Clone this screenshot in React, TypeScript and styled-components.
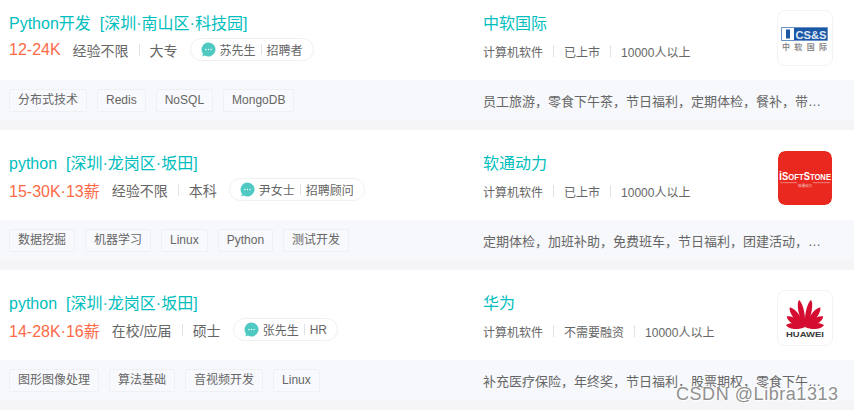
import styled, { createGlobalStyle } from 'styled-components';

const GlobalStyle = createGlobalStyle`
  html, body {
    margin: 0;
    padding: 0;
    background: #fff;
  }
  body {
    font-family: "Liberation Sans", "Noto Sans CJK SC", sans-serif;
    overflow: hidden;
  }
`;

interface Job {
  title: string;
  area: string;
  salary: string;
  experience: string;
  degree: string;
  recruiter: string;
  role: string;
  tags: string[];
  company: string;
  stage: string;
  size: string;
  welfare: string;
  logo: 'css' | 'isoft' | 'huawei';
}

const jobs: Job[] = [
  {
    title: 'Python开发',
    area: '[深圳·南山区·科技园]',
    salary: '12-24K',
    experience: '经验不限',
    degree: '大专',
    recruiter: '苏先生',
    role: '招聘者',
    tags: ['分布式技术', 'Redis', 'NoSQL', 'MongoDB'],
    company: '中软国际',
    stage: '已上市',
    size: '10000人以上',
    welfare: '员工旅游，零食下午茶，节日福利，定期体检，餐补，带薪年假',
    logo: 'css',
  },
  {
    title: 'python',
    area: '[深圳·龙岗区·坂田]',
    salary: '15-30K·13薪',
    experience: '经验不限',
    degree: '本科',
    recruiter: '尹女士',
    role: '招聘顾问',
    tags: ['数据挖掘', '机器学习', 'Linux', 'Python', '测试开发'],
    company: '软通动力',
    stage: '已上市',
    size: '10000人以上',
    welfare: '定期体检，加班补助，免费班车，节日福利，团建活动，餐补',
    logo: 'isoft',
  },
  {
    title: 'python',
    area: '[深圳·龙岗区·坂田]',
    salary: '14-28K·16薪',
    experience: '在校/应届',
    degree: '硕士',
    recruiter: '张先生',
    role: 'HR',
    tags: ['图形图像处理', '算法基础', '音视频开发', 'Linux'],
    company: '华为',
    stage: '不需要融资',
    size: '10000人以上',
    welfare: '补充医疗保险，年终奖，节日福利，股票期权，零食下午茶，餐补',
    logo: 'huawei',
  },
];

const App = () => {
  return (
    <>
      <GlobalStyle />
      <Page>
        <List>
          {jobs.map(job => (
            <Card key={job.salary}>
              <Primary>
                <JobInfo>
                  <TitleRow>
                    <span>{job.title}</span>
                    <span>{job.area}</span>
                  </TitleRow>
                  <MetaRow>
                    <Salary>{job.salary}</Salary>
                    <span>{job.experience}</span>
                    <Divider />
                    <span>{job.degree}</span>
                    <Recruiter>
                      <ChatIcon />
                      <span>{job.recruiter}</span>
                      <SmallDivider />
                      <span>{job.role}</span>
                    </Recruiter>
                  </MetaRow>
                </JobInfo>
                <CompanyInfo>
                  <CompanyName>{job.company}</CompanyName>
                  <CompanyMeta>
                    <span>计算机软件</span>
                    <Divider />
                    <span>{job.stage}</span>
                    <Divider />
                    <span>{job.size}</span>
                  </CompanyMeta>
                </CompanyInfo>
                <LogoBox $filled={job.logo === 'isoft'}>
                  {job.logo === 'css' && <CssLogo />}
                  {job.logo === 'isoft' && <IsoftLogo />}
                  {job.logo === 'huawei' && <HuaweiLogo />}
                </LogoBox>
              </Primary>
              <Footer>
                <Tags>
                  {job.tags.map(tag => <Tag key={tag}>{tag}</Tag>)}
                </Tags>
                <Welfare>{job.welfare}</Welfare>
              </Footer>
            </Card>
          ))}
        </List>
        <Watermark>CSDN @Libra1313</Watermark>
      </Page>
    </>
  );
};

const ChatIcon = () => (
  <svg width="15" height="15" viewBox="0 0 15 15" style={{ flexShrink: 0 }}>
    <path d="M7.5 0.5a7 7 0 1 1-3.6 13l-2.6.9.7-2.7A7 7 0 0 1 7.5.5z" fill="#4fc9c2" />
    <circle cx="4.9" cy="7.5" r=".7" fill="#fff" />
    <circle cx="7.5" cy="7.5" r=".7" fill="#fff" />
    <circle cx="10.1" cy="7.5" r=".7" fill="#fff" />
  </svg>
);

const CssLogo = () => (
  <svg width="54" height="54" viewBox="1 1 54 54">
    <rect x="4" y="17" width="47" height="14" fill="#9dbbe0" />
    <rect x="4.600" y="17.600" width="45.800" height="12.800" fill="#1c57a5" />
    <rect x="5" y="18" width="12" height="12" fill="#fff" />
    <rect x="9" y="19.500" width="4" height="9" fill="#1c57a5" />
    <text x="18.500" y="28.500" fontSize="10" fontWeight="700" fill="#dfe9f5" textLength="31" lengthAdjust="spacingAndGlyphs" fontFamily="Liberation Sans">CS&amp;S</text>
    <text x="5" y="39.500" fontSize="8" fontWeight="700" fill="#8d8d8d" textLength="45" fontFamily="Noto Sans CJK SC">中软国际</text>
  </svg>
);

const IsoftLogo = () => (
  <svg width="54" height="54" viewBox="1 1 54 54">
    <text x="2" y="30" fontSize="9" fontWeight="700" fill="#fff" textLength="52" lengthAdjust="spacingAndGlyphs" fontFamily="Liberation Sans">
      <tspan fontSize="13">i</tspan>
      <tspan fontSize="11">S</tspan>OFT<tspan fontSize="11">S</tspan>TONE
    </text>
    <rect x="3" y="32.500" width="17" height=".6" fill="#f7b9b3" />
    <rect x="36" y="32.500" width="17" height=".6" fill="#f7b9b3" />
    <text x="21" y="36.500" fontSize="3.600" fill="#f9d5d1" textLength="14" fontFamily="Noto Sans CJK SC">软通动力</text>
  </svg>
);

// one fan blade, tip pointing up from the origin
const petalPath = (len: number, wide: number) =>
  `M0 0C${-wide} ${-len * 0.35} ${-wide} ${-len * 0.85} ${-wide * 0.15} ${-len}` +
  `C${wide * 0.75} ${-len * 0.8} ${wide * 0.55} ${-len * 0.3} 0 0z`;

const petals = [
  { angle: -82, len: 19, wide: 4.5 },
  { angle: -58, len: 21, wide: 5 },
  { angle: -36, len: 25, wide: 5 },
  { angle: -11, len: 28, wide: 4.5 },
  { angle: 11, len: 28, wide: -4.5 },
  { angle: 36, len: 25, wide: -5 },
  { angle: 58, len: 21, wide: -5 },
  { angle: 82, len: 19, wide: -4.5 },
];

const HuaweiLogo = () => (
  <svg width="54" height="54" viewBox="1 1 54 54">
    {petals.map(p => (
      <path
        key={p.angle}
        d={petalPath(p.len, p.wide)}
        fill="#d50d30"
        transform={`translate(28 37) rotate(${p.angle})`}
      />
    ))}
    <text x="9" y="47" fontSize="7.500" fontWeight="700" fill="#3a3a3a" textLength="38" lengthAdjust="spacingAndGlyphs" fontFamily="Liberation Sans">HUAWEI</text>
  </svg>
);

const Page = styled.div`
  width: 854px;
  height: 411px;
  overflow: hidden;
  position: relative;
`;

const List = styled.div`
  display: flex;
  flex-direction: column;
  margin-top: -10px;
`;

const Card = styled.div`
  padding-bottom: 10px;
  background: #f5f5f7;
`;

const Primary = styled.div`
  height: 90px;
  background: #fff;
  display: flex;
  box-sizing: border-box;
  padding: 20px 21px 0 9px;
`;

const JobInfo = styled.div`
  width: 474px;
  flex-shrink: 0;
  padding-top: 2px;
`;

const TitleRow = styled.div`
  display: flex;
  gap: 9px;
  height: 24px;
  line-height: 24px;
  font-size: 16px;
  color: #00bebd;
`;

const MetaRow = styled.div`
  display: flex;
  align-items: center;
  height: 23px;
  margin-top: 2px;
  font-size: 14px;
  color: #666;
`;

const Salary = styled.span`
  font-size: 16px;
  color: #fd6a47;
  margin-right: 12px;
`;

const Divider = styled.i`
  width: 1px;
  height: 12px;
  background: #dfe2e6;
  margin: 0 10px;
`;

const SmallDivider = styled.i`
  width: 1px;
  height: 11px;
  background: #dfe2e6;
  margin: 0 5px;
`;

const Recruiter = styled.div`
  display: flex;
  align-items: center;
  height: 21px;
  margin-left: 12px;
  padding: 0 10px;
  border: 1px solid #eef0f2;
  border-radius: 12px;
  font-size: 12px;
  color: #666;

  svg {
    margin-right: 4px;
  }
`;

const CompanyInfo = styled.div`
  flex: 1;
  padding-top: 2px;
`;

const CompanyName = styled.div`
  height: 24px;
  line-height: 24px;
  font-size: 16px;
  color: #00bebd;
`;

const CompanyMeta = styled.div`
  display: flex;
  align-items: center;
  height: 24px;
  margin-top: 3px;
  font-size: 12px;
  color: #666;
`;

const LogoBox = styled.div<{ $filled?: boolean }>`
  width: 56px;
  height: 56px;
  box-sizing: border-box;
  border-radius: 8px;
  border: 1px solid ${p => (p.$filled ? '#fff' : '#f2f3f5')};
  background: ${p => (p.$filled ? '#e9281f' : '#fff')};
  background-clip: padding-box;
  display: flex;
  flex-shrink: 0;
  overflow: hidden;
`;

const Footer = styled.div`
  height: 40px;
  background: #f7f8fb;
  display: flex;
  align-items: center;
  padding: 0 28px 0 9px;
`;

const Tags = styled.div`
  width: 474px;
  flex-shrink: 0;
  display: flex;
  gap: 10px;
`;

const Tag = styled.span`
  height: 23px;
  line-height: 21px;
  box-sizing: border-box;
  padding: 0 8px;
  border: 1px solid #eef0f3;
  border-radius: 2px;
  font-size: 12px;
  color: #666;
  background: #f8f9fc;
`;

const Welfare = styled.div`
  flex: 1;
  min-width: 0;
  font-size: 13px;
  color: #666;
  white-space: nowrap;
  overflow: hidden;
  text-overflow: ellipsis;
`;

const Watermark = styled.div`
  position: absolute;
  left: 676px;
  top: 387px;
  font-size: 18px;
  line-height: 15px;
  color: #909090;
  text-shadow: 1px 1px 1px #fff, -1px -1px 1px #fff;
  letter-spacing: 0.55px;
  white-space: nowrap;
`;

export default App;
